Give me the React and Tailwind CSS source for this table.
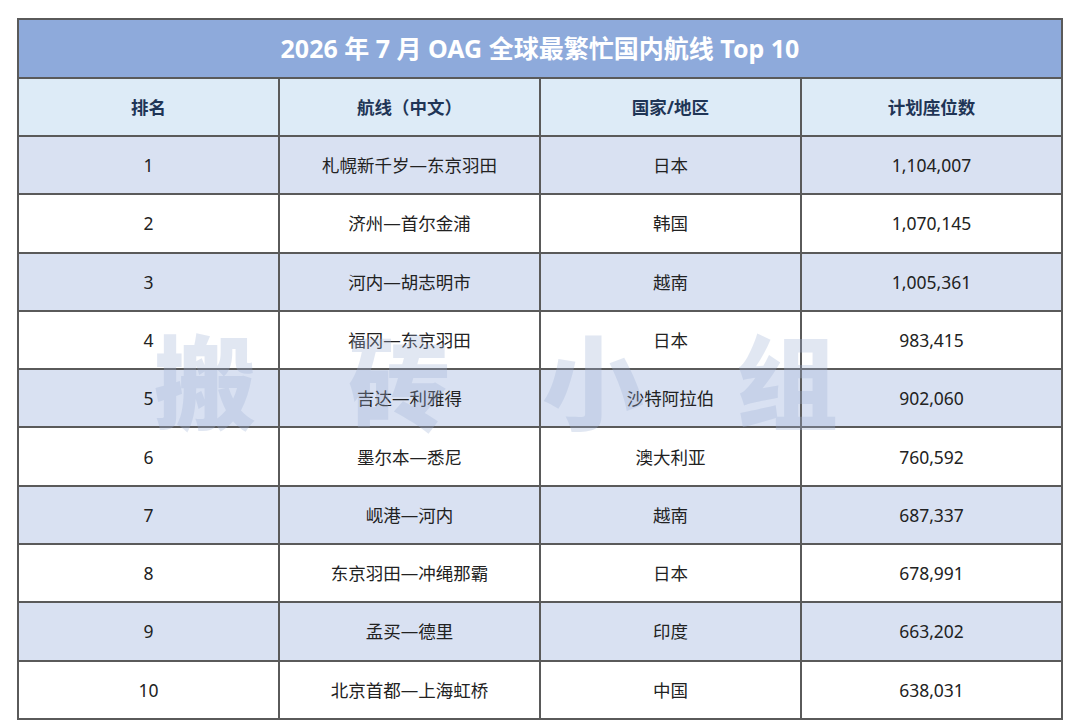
import React from 'react';

const routes = [
  { rank: 1, route: '札幌新千岁—东京羽田', country: '日本', seats: '1,104,007' },
  { rank: 2, route: '济州—首尔金浦', country: '韩国', seats: '1,070,145' },
  { rank: 3, route: '河内—胡志明市', country: '越南', seats: '1,005,361' },
  { rank: 4, route: '福冈—东京羽田', country: '日本', seats: '983,415' },
  { rank: 5, route: '吉达—利雅得', country: '沙特阿拉伯', seats: '902,060' },
  { rank: 6, route: '墨尔本—悉尼', country: '澳大利亚', seats: '760,592' },
  { rank: 7, route: '岘港—河内', country: '越南', seats: '687,337' },
  { rank: 8, route: '东京羽田—冲绳那霸', country: '日本', seats: '678,991' },
  { rank: 9, route: '孟买—德里', country: '印度', seats: '663,202' },
  { rank: 10, route: '北京首都—上海虹桥', country: '中国', seats: '638,031' },
];

const headers = ['排名', '航线（中文）', '国家/地区', '计划座位数'];

function App() {
  return (
    <div
      className="relative w-[1080px] h-[723px] bg-white pt-[18px] pl-[17px]"
      style={{ fontFamily: '"Noto Sans", "Noto Sans CJK SC", sans-serif' }}
    >
      <table className="w-[1046px] border-collapse table-fixed">
        <thead>
          <tr className="h-[59px] bg-[#8eaadb]">
            <th colSpan={4} className="border-2 border-[#5a5a5a] text-white text-[25px] font-bold">
              2026 年 7 月 OAG 全球最繁忙国内航线 Top 10
            </th>
          </tr>
          <tr className="h-[58px] bg-[#ddebf7]">
            {headers.map((h) => (
              <th key={h} className="border-2 border-[#5a5a5a] text-[#1f3556] text-[17.5px] font-bold">
                {h}
              </th>
            ))}
          </tr>
        </thead>
        <tbody>
          {routes.map((r) => (
            <tr key={r.rank} className={`h-[58.3px] ${r.rank % 2 === 1 ? 'bg-[#d9e1f2]' : 'bg-white'}`}>
              <td className="border-2 border-[#5a5a5a] text-center text-[17.5px] text-[#222]">{r.rank}</td>
              <td className="border-2 border-[#5a5a5a] text-center text-[17.5px] text-[#222]">{r.route}</td>
              <td className="border-2 border-[#5a5a5a] text-center text-[17.5px] text-[#222]">{r.country}</td>
              <td className="border-2 border-[#5a5a5a] text-center text-[17.5px] text-[#222]">{r.seats}</td>
            </tr>
          ))}
        </tbody>
      </table>

      {/* watermark */}
      <div className="pointer-events-none absolute left-[154px] top-[332px] flex gap-[92px] text-[102px] font-black leading-none text-[#9fb2d6] opacity-30">
        <span>搬</span>
        <span>砖</span>
        <span>小</span>
        <span>组</span>
      </div>
    </div>
  );
}

export default App;
